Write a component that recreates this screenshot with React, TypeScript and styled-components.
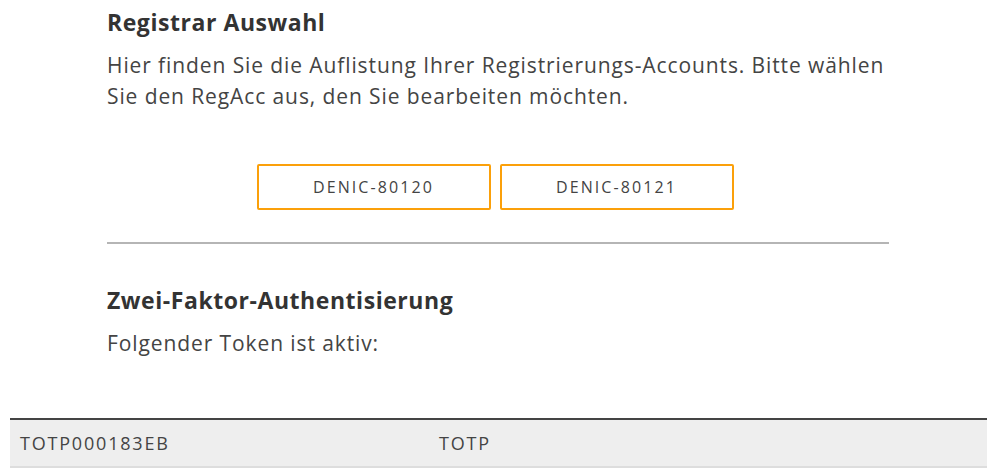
import React from "react";
import styled, { createGlobalStyle } from "styled-components";

const Global = createGlobalStyle`
  html, body { margin: 0; padding: 0; background: #fff; }
  body { font-family: "Open Sans", "Liberation Sans", sans-serif; color: #444; }
`;

const Page = styled.div`
  width: 996px;
  padding-top: 7px;
`;

const Column = styled.section`
  width: 782px;
  margin: 0 auto;
`;

const Heading = styled.h2`
  margin: 0;
  font-size: 23px;
  line-height: 30px;
  font-weight: 700;
  letter-spacing: 0.55px;
  color: #333;
`;

const Text = styled.p`
  margin: 13px 0 0;
  font-size: 21px;
  line-height: 31px;
  letter-spacing: 0.9px;
  color: #444;
`;

const ButtonRow = styled.div`
  display: flex;
  justify-content: center;
  gap: 9px;
  margin-top: 52px;
  padding-right: 6px;
`;

const AccButton = styled.button`
  width: 234px;
  height: 46px;
  border: 2px solid #fba00a;
  border-radius: 2px;
  background: #fff;
  font-family: "Open Sans", "Liberation Sans", sans-serif;
  font-size: 16px;
  letter-spacing: 2.1px;
  color: #444;
  cursor: pointer;
`;

const Divider = styled.hr`
  margin: 32px 0 0;
  border: none;
  border-top: 2px solid #b5b5b5;
`;

const Section2 = styled(Column)`
  margin-top: 41px;
`;

const Table = styled.div`
  margin: 59px 9px 0 10px;
  border-top: 2px solid #444;
  border-bottom: 2px solid #ddd;
  background: #eee;
`;

const Row = styled.div`
  display: grid;
  grid-template-columns: 419px 1fr;
  height: 46px;
  align-items: center;
  padding-left: 10px;
  font-size: 18px;
  letter-spacing: 1.8px;
  color: #444;
`;

export default function App() {
  return (
    <Page>
      <Global />
      <Column>
        <Heading>Registrar Auswahl</Heading>
        <Text>
          Hier finden Sie die Auflistung Ihrer Registrierungs-Accounts. Bitte wählen Sie den RegAcc aus, den Sie
          bearbeiten möchten.
        </Text>
        <ButtonRow>
          <AccButton>DENIC-80120</AccButton>
          <AccButton>DENIC-80121</AccButton>
        </ButtonRow>
        <Divider />
      </Column>
      <Section2>
        <Heading>Zwei-Faktor-Authentisierung</Heading>
        <Text>Folgender Token ist aktiv:</Text>
      </Section2>
      <Table>
        <Row>
          <span>TOTP000183EB</span>
          <span>TOTP</span>
        </Row>
      </Table>
    </Page>
  );
}
